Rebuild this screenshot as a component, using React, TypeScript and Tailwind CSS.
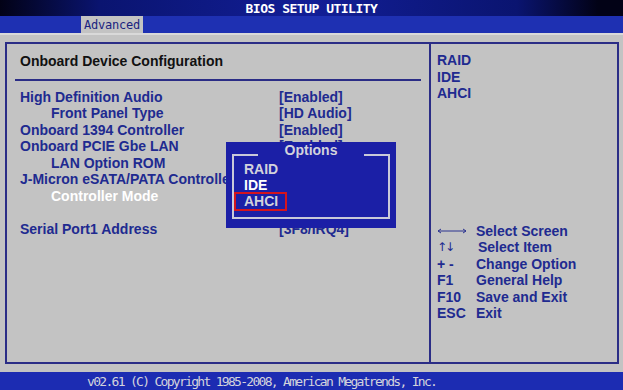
const ITEMS = [
  { label: "High Definition Audio", value: "[Enabled]", sub: false },
  { label: "Front Panel Type", value: "[HD Audio]", sub: true },
  { label: "Onboard 1394 Controller", value: "[Enabled]", sub: false },
  { label: "Onboard PCIE Gbe LAN", value: "[Enabled]", sub: false },
  { label: "LAN Option ROM", value: "", sub: true },
  { label: "J-Micron eSATA/PATA Controller", value: "", sub: false },
  { label: "Controller Mode", value: "", sub: true, active: true },
  { label: "", value: "", sub: false },
  { label: "Serial Port1 Address", value: "[3F8/IRQ4]", sub: false },
];

const HELP = [
  { key: "arrows-lr", text: "Select Screen" },
  { key: "arrows-ud", text: "Select Item", nudge: true },
  { key: "+ -", text: "Change Option" },
  { key: "F1", text: "General Help" },
  { key: "F10", text: "Save and Exit" },
  { key: "ESC", text: "Exit" },
];

function HelpKey({ k }: { k: string }) {
  if (k === "arrows-lr")
    return (
      <svg width="30" height="8" viewBox="0 0 30 8" className="mt-[1px]">
        <path d="M1 4H29M1 4L4 2M1 4L4 6M29 4L26 2M29 4L26 6" stroke="#2a3290" strokeWidth="1" fill="none" />
      </svg>
    );
  if (k === "arrows-ud")
    return <span className="font-['DejaVu_Sans',sans-serif] text-[12px] font-normal tracking-[-2px]">↑↓</span>;
  return <span>{k}</span>;
}

export default function App() {
  return (
    <div className="relative flex h-[390px] w-[623px] flex-col overflow-hidden bg-[#c3c3c3] font-['Liberation_Sans',Arial,sans-serif] text-[14px] font-bold">
      {/* title bar */}
      <div className="flex h-[16px] items-center justify-center bg-[linear-gradient(to_right,#020216_0%,#0a1470_16%,#121e96_50%,#0a1470_83%,#020216_96%)]">
        <span className="font-['DejaVu_Sans_Mono',monospace] text-[13px] font-bold leading-none tracking-[-0.5px] text-white">BIOS SETUP UTILITY</span>
      </div>
      {/* tab bar */}
      <div className="flex h-[17px] bg-[#1e30b2] pl-[81px]">
        <div className="flex w-[62px] items-center justify-center bg-[#c3c3c3] font-['DejaVu_Sans_Mono',monospace] text-[12px] font-normal leading-none tracking-[-0.2px] text-[#1a2380]">
          Advanced
        </div>
      </div>
      <div className="h-[2px] bg-[#d9d9d9]" />

      {/* body */}
      <div className="relative flex-1 pl-[5px] pt-[7px]">
        <div className="flex h-[322px] w-[614px] border-2 border-[#2b2d86]">
          {/* left */}
          <div className="w-[422px] leading-[16.5px] text-[#202a90]">
            <div className="pl-[13px] pt-[9px] text-[#111]">Onboard Device Configuration</div>
            <div className="mx-[8px] mt-[9px] h-[2px] bg-[#2b2d86]" />
            <div className="mt-[8px]">
              {ITEMS.map((it, i) => (
                <div key={i} className="flex h-[16.5px] whitespace-nowrap">
                  <span className={`w-[272px] ${it.sub ? "pl-[44px]" : "pl-[13px]"} ${it.active ? "text-white" : ""}`}>{it.label}</span>
                  <span>{it.value}</span>
                </div>
              ))}
            </div>
          </div>
          {/* right */}
          <div className="flex-1 border-l-2 border-[#2b2d86] pl-[6px] leading-[16.5px] text-[#202a90]">
            <div className="pt-[8px]">
              <div>RAID</div>
              <div>IDE</div>
              <div>AHCI</div>
            </div>
            <div className="mt-[121px]">
              {HELP.map((h) => (
                <div key={h.text} className="flex h-[16.5px] items-center">
                  <span className="flex w-[39px] items-center">
                    <HelpKey k={h.key} />
                  </span>
                  <span className={h.nudge ? "pl-[2px]" : ""}>{h.text}</span>
                </div>
              ))}
            </div>
          </div>
        </div>

        {/* options popup */}
        <div className="absolute left-[226px] top-[107px] h-[86px] w-[170px] bg-[#1b1fa6] px-[6px] pt-[12px] leading-[16px] text-[#d2d2dc]">
          <div className="relative h-[65px] border-x-2 border-b-2 border-[#c9c9d9]">
            <div className="absolute left-[-2px] top-0 h-[2px] w-[26px] bg-[#c9c9d9]" />
            <div className="absolute right-[-2px] top-0 h-[2px] w-[26px] bg-[#c9c9d9]" />
            <div className="absolute left-0 right-0 top-[-12px] text-center">Options</div>
            <div className="pl-[10px] pt-[7px]">
              <div>RAID</div>
              <div className="text-white">IDE</div>
              <div className="relative">
                AHCI
                <div className="absolute left-[-10px] top-[-1px] h-[19px] w-[53px] border-2 border-[#d3141e]" />
              </div>
            </div>
          </div>
        </div>
      </div>

      {/* footer */}
      <div className="flex h-[18px] items-center bg-[#1c2cb2] pl-[87px]">
        <span className="font-['DejaVu_Sans_Mono',monospace] text-[13px] font-normal leading-none tracking-[-1.7px] text-[#d4d4dc]">
          v02.61 (C) Copyright 1985-2008, American Megatrends, Inc.
        </span>
      </div>
    </div>
  );
}
